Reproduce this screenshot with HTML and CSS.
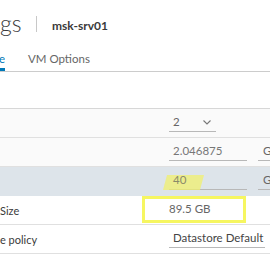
FILE: index.html
```html
<!DOCTYPE html>
<html>
<head>
<meta charset="utf-8">
<link rel="stylesheet" href="styles.css">
</head>
<body>
<div class="page">
  <div class="header">
    <span class="title">gs</span>
    <span class="divider"></span>
    <span class="vmname">msk-srv01</span>
  </div>
  <div class="tabs">
    <span class="tab active">e</span>
    <span class="tab">VM Options</span>
  </div>
  <div class="table">
    <div class="row grey">
      <div class="label"></div>
      <div class="value">
        <div class="select">
          <span>2</span>
          <svg class="chev" width="8" height="5" viewBox="0 0 8 5"><path d="M0.5 0.5 L4 4 L7.5 0.5" fill="none" stroke="#777" stroke-width="1.1"/></svg>
        </div>
      </div>
    </div>
    <div class="row grey">
      <div class="label"></div>
      <div class="value">
        <div class="input wide">2.046875</div>
        <div class="unit">G</div>
      </div>
    </div>
    <div class="row selected">
      <div class="label"></div>
      <div class="value">
        <div class="input wide hl"><span class="mark"></span><span class="num">40</span></div>
        <div class="unit">G</div>
      </div>
    </div>
    <div class="row">
      <div class="label">Size</div>
      <div class="value">
        <div class="plain">89.5 GB</div>
        <span class="box"></span>
      </div>
    </div>
    <div class="row">
      <div class="label">e policy</div>
      <div class="value">
        <div class="input policy">Datastore Default</div>
      </div>
    </div>
  </div>
</div>
</body>
</html>
```

FILE: styles.css
```css
html, body {
  margin: 0;
  padding: 0;
  background: #ffffff;
}
.page {
  width: 270px;
  height: 260px;
  overflow: hidden;
  font-family: "Lato", "Open Sans", sans-serif;
  color: #333333;
}
.header {
  display: flex;
  align-items: center;
  height: 46px;
  padding-top: 4px;
  box-sizing: border-box;
}
.title {
  font-size: 23px;
  font-weight: 300;
  color: #3a3a3a;
  width: 36px;
  line-height: 24px;
  margin-top: -5px;
}
.divider {
  width: 1px;
  height: 16px;
  background: #c8c8c8;
  margin-right: 15px;
  margin-top: -2px;
}
.vmname {
  font-size: 12px;
  font-weight: 700;
  color: #3a3a3a;
  margin-top: 0;
}
.tabs {
  display: flex;
  height: 26px;
  border-bottom: 1px solid #cccccc;
  box-sizing: border-box;
}
.tab {
  font-size: 11.5px;
  color: #666666;
  line-height: 20px;
  padding-top: 3px;
  box-sizing: border-box;
  white-space: nowrap;
}
.tab.active {
  color: #0079b8;
  width: 5px;
  overflow: hidden;
  border-bottom: 3px solid #0079b8;
  margin-right: 23px;
  display: flex;
  justify-content: flex-end;
}
.table {
  margin-top: 36px;
  border-top: 1px solid #d7d7d7;
}
.row {
  display: grid;
  grid-template-columns: 169px 1fr;
  height: 29px;
  border-bottom: 1px solid #e0e0e0;
  box-sizing: border-box;
  font-size: 11.5px;
}
.row.grey {
  background: #fafafa;
}
.row.selected {
  background: #dde4ea;
  border-bottom-color: #dde4ea;
}
.label {
  display: flex;
  align-items: center;
  color: #3a3a3a;
  font-size: 11px;
  padding-top: 1px;
  white-space: nowrap;
}
.value {
  display: flex;
  align-items: flex-start;
  position: relative;
}
.select {
  display: flex;
  align-items: center;
  justify-content: space-between;
  width: 47px;
  height: 23px;
  padding: 3px 5px 0 4px;
  box-sizing: border-box;
  border-bottom: 1px solid #b8b8b8;
  color: #666;
}
.chev { margin-top: 1px; }
.input {
  height: 23px;
  line-height: 18px;
  padding-top: 4px;
  padding-left: 4px;
  box-sizing: border-box;
  border-bottom: 1px solid #b8b8b8;
  color: #777;
  white-space: nowrap;
}
.wide { width: 78px; }
.unit {
  margin-left: 11px;
  height: 23px;
  line-height: 18px;
  padding-top: 4px;
  padding-left: 5px;
  box-sizing: border-box;
  width: 20px;
  border-bottom: 1px solid #b8b8b8;
  color: #666;
}
.hl { position: relative; }
.mark {
  position: absolute;
  left: -4px;
  top: 8px;
  width: 37px;
  height: 15px;
  background: rgba(240, 240, 110, 0.75);
  transform: skewX(-15deg);
}
.num {
  position: relative;
  color: #8a8a6a;
}
.plain {
  line-height: 18px;
  padding-top: 4px;
  color: #666;
  white-space: nowrap;
}
.box {
  position: absolute;
  left: -27px;
  top: 0;
  width: 104px;
  height: 27px;
  border: 3px solid #f6f660;
  box-sizing: border-box;
}
.policy {
  width: 96px;
  color: #444;
  margin-top: 0;
}
```
